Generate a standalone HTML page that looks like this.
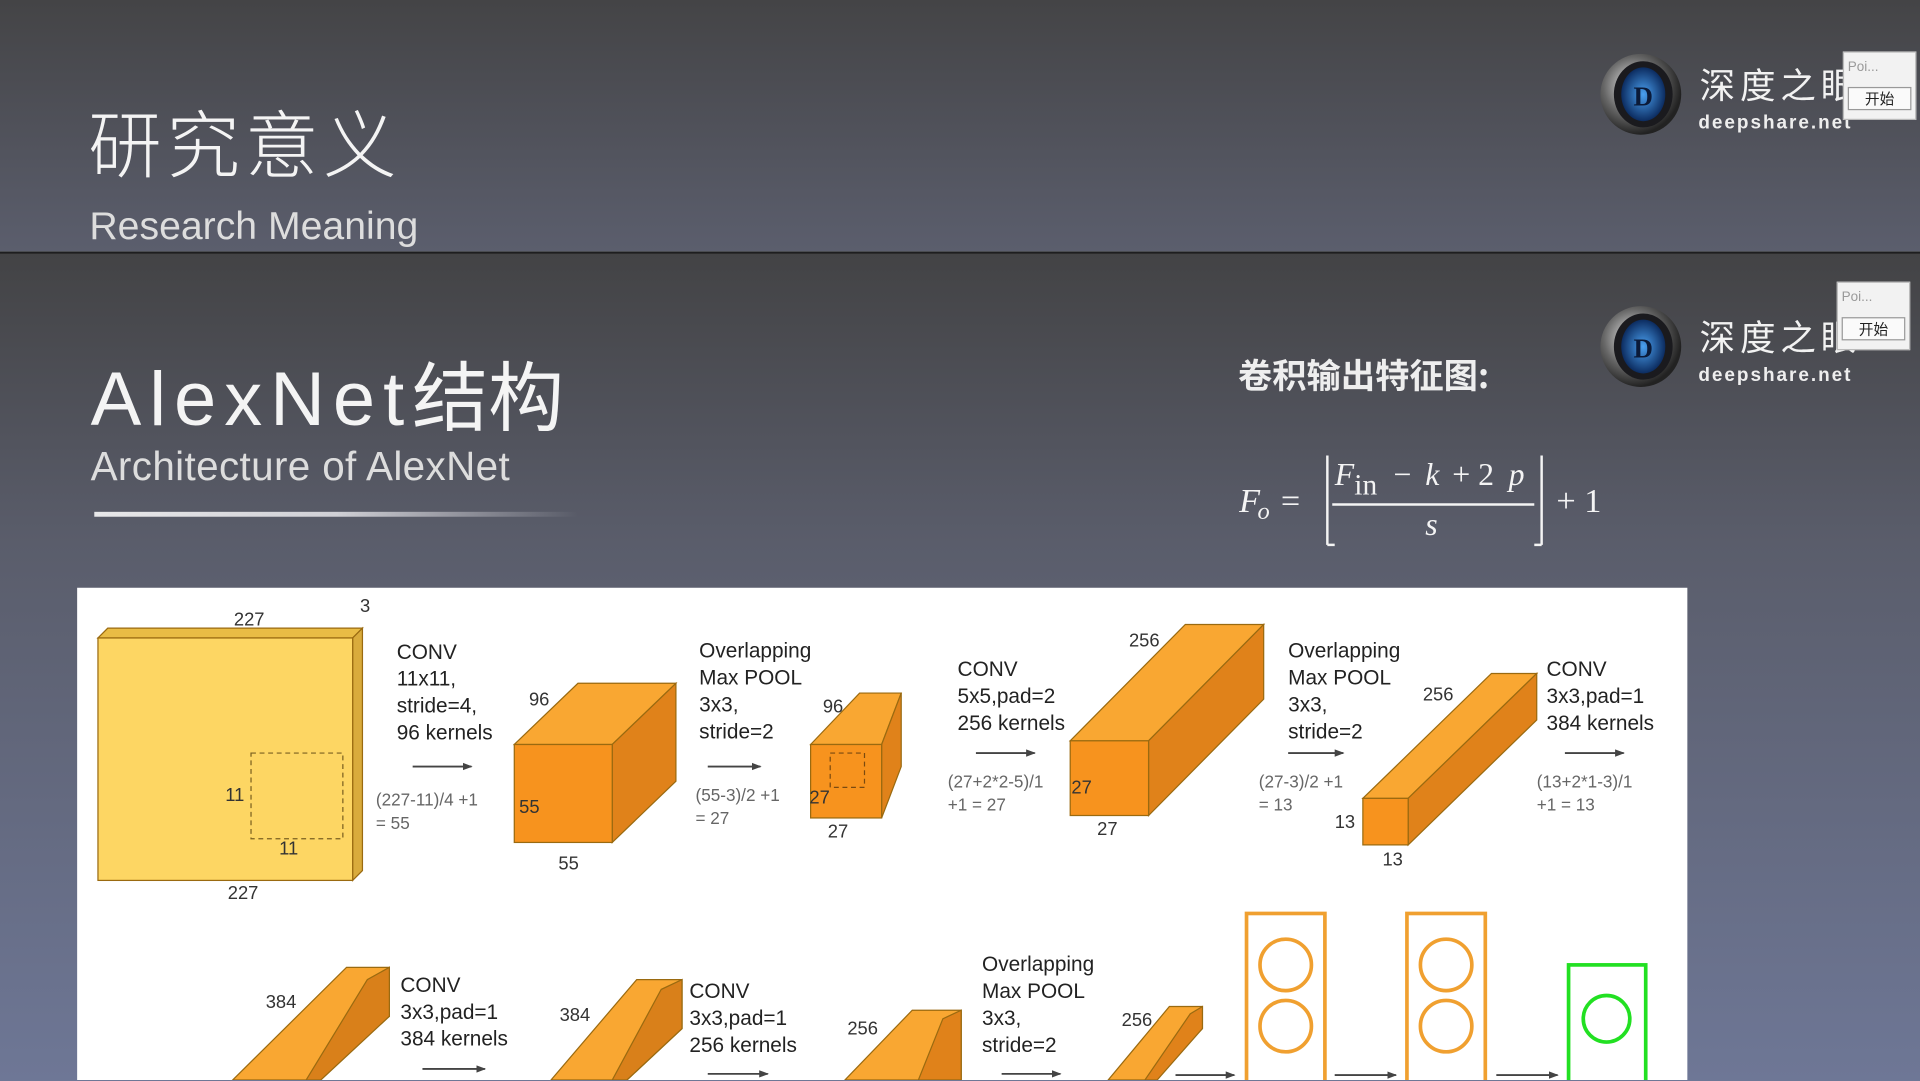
<!DOCTYPE html>
<html><head><meta charset="utf-8"><style>
html,body{margin:0;padding:0;width:1920px;height:1080px;overflow:hidden;background:#4a4b50}
#s{position:absolute;left:0;top:0;width:1568px;height:882px;transform:scale(1.22449);transform-origin:0 0;font-family:"Liberation Sans","Noto Sans CJK SC",sans-serif}
.t1{position:absolute;left:0;top:0;width:1568px;height:205px;background:linear-gradient(#444446,#5b5e6d)}
.t2{position:absolute;left:0;top:206px;width:1568px;height:676px;background:linear-gradient(#434345 0%,#5a5d6b 35%,#6e7796 100%);border-top:1.5px solid #111}
.a{position:absolute;color:#f4f4f4;white-space:nowrap}
.box{position:absolute;background:#f2f2f2;border:1px solid #bbb;font-size:11px;color:#999}
</style></head><body><div id="s">
<div class="t1"></div><div class="t2"></div>
<div class="a" style="left:72px;top:80px;font-size:60px;line-height:70px;letter-spacing:4px;font-family:'Noto Sans CJK SC',sans-serif;font-weight:300">研究意义</div>
<div class="a" style="left:73px;top:166px;font-size:32px;color:#ddd;font-weight:300">Research Meaning</div>
<div class="a" style="left:74px;top:284px;font-size:62px;line-height:72px;letter-spacing:6.5px">AlexNet<span style="font-family:'Noto Sans CJK SC',sans-serif;letter-spacing:0">结构</span></div>
<div class="a" style="left:74px;top:362px;font-size:33px;letter-spacing:0.3px;color:#ddd;font-weight:300">Architecture of AlexNet</div>
<div style="position:absolute;left:77px;top:418px;width:395px;height:4px;background:linear-gradient(90deg,#e8e8ea,#d0d0d6 50%,rgba(120,125,140,0))"></div>
<div class="a" style="left:1011px;top:286px;font-size:28px;font-family:'Noto Sans CJK SC',sans-serif;font-weight:bold;color:#eee">卷积输出特征图:</div>

<svg style="position:absolute;left:0;top:0" width="1568" height="882">
<defs><radialGradient id="lg" cx="0.4" cy="0.4" r="0.6"><stop offset="0" stop-color="#eee"/><stop offset="0.6" stop-color="#666"/><stop offset="1" stop-color="#222"/></radialGradient>
<radialGradient id="bl" cx="0.5" cy="0.5" r="0.5"><stop offset="0" stop-color="#4aa0f0"/><stop offset="1" stop-color="#0c2c60"/></radialGradient>
<marker id="ah" markerWidth="8" markerHeight="8" refX="7" refY="4" orient="auto" markerUnits="userSpaceOnUse"><path d="M0 1L8 4L0 7z" fill="#444"/></marker></defs>
<g id="logo">
<circle cx="1340" cy="77" r="33" fill="url(#lg)"/><ellipse cx="1342" cy="77" rx="24" ry="27" fill="#1a1a1e"/><ellipse cx="1342" cy="77" rx="18" ry="22" fill="url(#bl)"/>
<text x="1334" y="86" font-size="22" font-weight="bold" fill="#0b1a38" font-family="Liberation Serif">D</text>
<text x="1388" y="80" font-size="29" fill="#f2f2f2" font-family="Noto Sans CJK SC" letter-spacing="4">深度之眼</text>
<text x="1387" y="105" font-size="15.5" font-weight="bold" fill="#eee" font-family="Liberation Sans" letter-spacing="1.6">deepshare.net</text>
</g>
<use href="#logo" transform="translate(0,206)"/>
<g font-family="Liberation Serif" fill="#f4f4f4" font-style="italic">
<text x="1012" y="418" font-size="28">F</text><text x="1027" y="424" font-size="20">o</text>
<text x="1046" y="418" font-size="28" font-style="normal">=</text>
<path d="M1084 372V445M1084 445h6M1259 372V445M1259 445h-6" stroke="#f4f4f4" stroke-width="2" fill="none"/>
<text x="1090" y="396" font-size="26">F</text><text x="1106" y="404" font-size="24" font-style="normal">in</text>
<text x="1138" y="396" font-size="26" font-style="normal">−</text><text x="1164" y="396" font-size="26">k</text>
<text x="1186" y="396" font-size="26" font-style="normal">+ 2</text><text x="1232" y="396" font-size="26">p</text>
<line x1="1088" y1="412" x2="1253" y2="412" stroke="#f4f4f4" stroke-width="2"/>
<text x="1164" y="437" font-size="26">s</text>
<text x="1271" y="418" font-size="28" font-style="normal">+ 1</text>
</g>
<rect x="63" y="480" width="1315" height="402" fill="#fff"/>
<g stroke="#9a6a10" stroke-width="1">
<polygon points="80,521 88,513 296,513 288,521" fill="#e9bc45"/><polygon points="288,521 296,513 296,711 288,719" fill="#d9ab3c"/><rect x="80" y="521" width="208" height="198" fill="#fdd663"/>
<rect x="205" y="615" width="75" height="70" fill="none" stroke="#7a6020" stroke-dasharray="4,3"/>
<polygon points="420,608 472,558 552,558 500,608" fill="#f9a732"/><polygon points="500,608 552,558 552,638 500,688" fill="#e0821a"/><rect x="420" y="608" width="80" height="80" fill="#f7931e"/>
<polygon points="662,608 702,566 736,566 720,608" fill="#f9a732"/><polygon points="720,608 736,566 736,626 720,668" fill="#e0821a"/><rect x="662" y="608" width="58" height="60" fill="#f7931e"/>
<rect x="678" y="615" width="28" height="28" fill="none" stroke="#7a4a10" stroke-dasharray="4,3"/>
<polygon points="874,605 968,510 1032,510 938,605" fill="#f9a732"/><polygon points="938,605 1032,510 1032,571 938,666" fill="#e0821a"/><rect x="874" y="605" width="64" height="61" fill="#f7931e"/>
<polygon points="1113,652 1218,550 1255,550 1150,652" fill="#f9a732"/><polygon points="1150,652 1255,550 1255,588 1150,690" fill="#e0821a"/><rect x="1113" y="652" width="37" height="38" fill="#f7931e"/>
<polygon points="283,790 318,790 318,830 250,882 190,882" fill="#f9a732"/><polygon points="318,790 318,830 262,882 250,882 300,800" fill="#d9801a"/>
<polygon points="520,800 557,800 557,840 512,882 450,882" fill="#f9a732"/><polygon points="557,800 557,840 512,882 500,882 540,808" fill="#d9801a"/>
<polygon points="745,825 785,825 785,882 690,882" fill="#f9a732"/><polygon points="785,825 785,882 750,882 770,832" fill="#e0821a"/>
<polygon points="955,822 982,822 982,840 940,882 905,882" fill="#f9a732"/><polygon points="982,822 982,840 945,882 935,882 972,828" fill="#e0821a"/>
</g>
<g fill="none" stroke-width="3">
<rect x="1018" y="746" width="64" height="140" stroke="#f0a030"/><circle cx="1050" cy="788" r="21" stroke="#f0a030"/><circle cx="1050" cy="838" r="21" stroke="#f0a030"/>
<rect x="1149" y="746" width="64" height="140" stroke="#f0a030"/><circle cx="1181" cy="788" r="21" stroke="#f0a030"/><circle cx="1181" cy="838" r="21" stroke="#f0a030"/>
<rect x="1281" y="788" width="63" height="100" stroke="#22e022"/><circle cx="1312" cy="832" r="19" stroke="#22e022"/>
</g>
<g stroke="#444" stroke-width="1.5" fill="none" marker-end="url(#ah)">
<path d="M337 626h48"/><path d="M578 626h43"/><path d="M797 615h48"/><path d="M1052 615h45"/><path d="M1278 615h48"/><path d="M345 873h51"/><path d="M578 877h49"/><path d="M818 877h48"/><path d="M960 878h48"/><path d="M1090 878h50"/><path d="M1222 878h50"/>
</g>
<g font-family="Liberation Sans" font-size="17" fill="#222">
<text x="324" y="538">CONV</text><text x="324" y="560">11x11,</text><text x="324" y="582">stride=4,</text><text x="324" y="604">96 kernels</text>
<text x="571" y="537">Overlapping</text><text x="571" y="559">Max POOL</text><text x="571" y="581">3x3,</text><text x="571" y="603">stride=2</text>
<text x="782" y="552">CONV</text><text x="782" y="574">5x5,pad=2</text><text x="782" y="596">256 kernels</text>
<text x="1052" y="537">Overlapping</text><text x="1052" y="559">Max POOL</text><text x="1052" y="581">3x3,</text><text x="1052" y="603">stride=2</text>
<text x="1263" y="552">CONV</text><text x="1263" y="574">3x3,pad=1</text><text x="1263" y="596">384 kernels</text>
<text x="327" y="810">CONV</text><text x="327" y="832">3x3,pad=1</text><text x="327" y="854">384 kernels</text>
<text x="563" y="815">CONV</text><text x="563" y="837">3x3,pad=1</text><text x="563" y="859">256 kernels</text>
<text x="802" y="793">Overlapping</text><text x="802" y="815">Max POOL</text><text x="802" y="837">3x3,</text><text x="802" y="859">stride=2</text>
</g>
<g font-family="Liberation Sans" font-size="15" fill="#333">
<text x="191" y="511">227</text><text x="294" y="500">3</text><text x="184" y="654">11</text><text x="228" y="698">11</text><text x="186" y="734">227</text>
<text x="432" y="576">96</text><text x="424" y="664">55</text><text x="456" y="710">55</text>
<text x="672" y="582">96</text><text x="661" y="656">27</text><text x="676" y="684">27</text>
<text x="922" y="528">256</text><text x="875" y="648">27</text><text x="896" y="682">27</text>
<text x="1162" y="572">256</text><text x="1090" y="676">13</text><text x="1129" y="707">13</text>
<text x="217" y="823">384</text><text x="457" y="834">384</text><text x="692" y="845">256</text><text x="916" y="838">256</text>
</g>
<g font-family="Liberation Sans" font-size="14" fill="#666">
<text x="307" y="658">(227-11)/4 +1</text><text x="307" y="677">= 55</text>
<text x="568" y="654">(55-3)/2 +1</text><text x="568" y="673">= 27</text>
<text x="774" y="643">(27+2*2-5)/1</text><text x="774" y="662">+1  = 27</text>
<text x="1028" y="643">(27-3)/2 +1</text><text x="1028" y="662">= 13</text>
<text x="1255" y="643">(13+2*1-3)/1</text><text x="1255" y="662">+1  = 13</text>
</g>
</svg>
<div class="box" style="left:1505px;top:42px;width:58px;height:54px"><div style="padding:6px 3px;height:14px">Poi...</div><div style="margin:2px 3px;border:1px solid #999;background:#fafafa;color:#222;text-align:center;font-size:12px">开始</div></div>
<div class="box" style="left:1500px;top:230px;width:58px;height:54px"><div style="padding:6px 3px;height:14px">Poi...</div><div style="margin:2px 3px;border:1px solid #999;background:#fafafa;color:#222;text-align:center;font-size:12px">开始</div></div>
</div></body></html>
